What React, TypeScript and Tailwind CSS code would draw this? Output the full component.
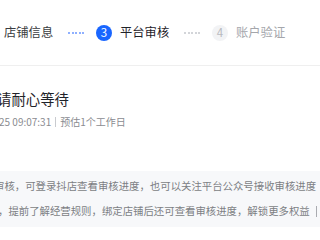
import React from "react";

function Dots({ active }: { active: boolean }) {
  return (
    <div className="ml-[12px] flex w-[16px] shrink-0 items-center gap-[1.5px]">
      {[0, 1, 2, 3, 4].map((i) => (
        <span
          key={i}
          className={active ? "h-[2px] w-[2px] bg-[#8fb0ff]" : "h-[2px] w-[2px] bg-[#d3d5d9]"}
        />
      ))}
    </div>
  );
}

function Step({ num, label, state }: { num: number; label: string; state: "done" | "active" | "todo" }) {
  return (
    <div className="flex shrink-0 items-center">
      <span
        className={
          state === "active"
            ? "ml-[12px] flex h-[16px] w-[16px] items-center justify-center rounded-full bg-[#1966ff] text-[11.5px] leading-none text-white"
            : "ml-[12px] flex h-[16px] w-[16px] items-center justify-center rounded-full bg-[#f2f3f5] text-[11.5px] leading-none text-[#b8babf]"
        }
      >
        {num}
      </span>
      <span
        className={
          state === "active"
            ? "ml-[8px] w-[52px] text-[12.3px] text-[#1f2329]"
            : "ml-[8px] w-[52px] text-[12.3px] text-[#a4a6ab]"
        }
      >
        {label}
      </span>
    </div>
  );
}

export default function App() {
  return (
    <div className="h-[240px] w-[320px] overflow-hidden bg-white font-['Noto_Sans_CJK_SC','Noto_Sans',sans-serif]">
      <div className="flex h-[66px] items-center whitespace-nowrap border-b border-[#efefef] pl-[4px]">
        <span className="w-[52px] shrink-0 text-[12.3px] text-[#3a3c41]">店铺信息</span>
        <Dots active />
        <Step num={3} label="平台审核" state="active" />
        <Dots active={false} />
        <Step num={4} label="账户验证" state="todo" />
      </div>

      <div className="ml-[-3px] mt-[23px] whitespace-nowrap text-[14.4px] leading-[20px] text-[#1f2329]">
        请耐心等待
      </div>
      <div className="ml-[-1px] mt-[6px] flex items-center whitespace-nowrap text-[10px] leading-[14px] text-[#8a8c91]">
        <span>25 09:07:31</span>
        <span className="mx-[4px] h-[10px] w-[1px] bg-[#c9cbcf]" />
        <span>预估1个工作日</span>
      </div>

      <div className="mt-[42px] bg-[#f7f8fa] pb-[8px] pt-[7px] text-[10.4px] leading-[16px] text-[#7d7f84]">
        <p className="ml-[-6px] whitespace-nowrap">审核，可登录抖店查看审核进度，也可以关注平台公众号接收审核进度</p>
        <p className="ml-[-2px] mt-[9px] flex items-center whitespace-nowrap">
          ，提前了解经营规则，绑定店铺后还可查看审核进度，解锁更多权益
          <span className="ml-[6px] h-[11px] w-[1px] shrink-0 bg-[#a9abb0]" />
        </p>
      </div>
    </div>
  );
}
